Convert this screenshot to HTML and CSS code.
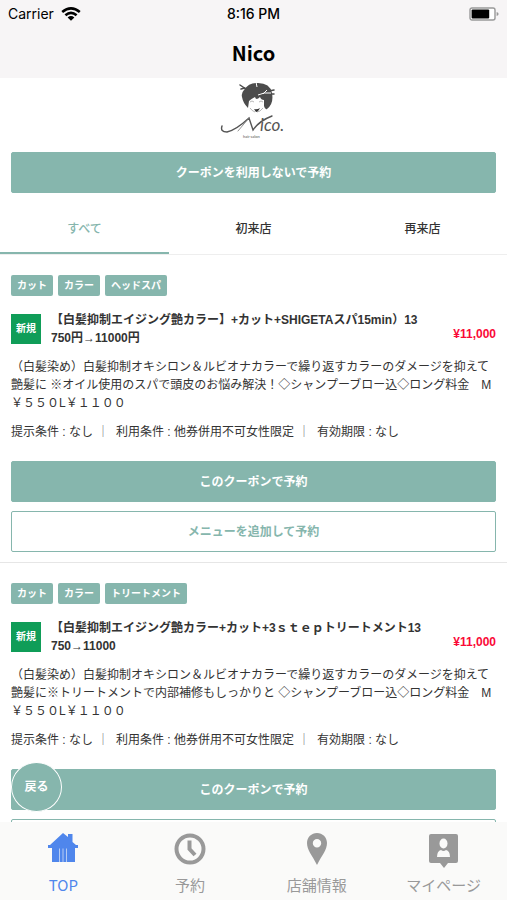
FILE: index.html
```html
<!DOCTYPE html>
<html lang="ja">
<head>
<meta charset="utf-8">
<meta name="viewport" content="width=device-width, initial-scale=1">
<title>Nico</title>
<link rel="stylesheet" href="styles.css">
</head>
<body>
<header class="header">
  <div class="status">
    <div class="status-carrier">Carrier
      <svg width="20" height="14" viewBox="0 0 20 14" aria-hidden="true"><g fill="none" stroke="#000" stroke-width="2.6"><path d="M1.2 5.1Q10-2.3 18.8 5.1"/><path d="M4.4 8.3Q10 3.6 15.6 8.3"/></g><path d="M6.6 10.5Q10 7.7 13.4 10.5L10 13.8Z"/></svg>
    </div>
    <div class="status-time">8:16 PM</div>
    <div class="status-battery">
      <svg width="30" height="14" viewBox="0 0 30 14" aria-hidden="true"><rect x="1" y="1" width="25" height="12" rx="2" fill="#fff" stroke="#999" stroke-width="1.4"/><rect x="2.6" y="2.6" width="17.6" height="8.8" rx="1"/><path d="M27.6 5v4q2-.5 2-2t-2-2z" fill="#999"/></svg>
    </div>
  </div>
  <h1 class="title">Nico</h1>
</header>

<main class="content">
  <svg class="logo" width="72" height="58" viewBox="0 0 72 58" role="img" aria-label="Nico hair salon">
    <path fill="#4c4c4c" d="M26 9Q31 1 40 2Q52 2 54 12Q56 23 49 28Q47 29 46 25L46 19Q43 19 42 16Q38 20 37 16Q33 18 31 20L30 27Q25 22 24 16Q23 12 26 9Z"/>
    <path fill="none" stroke="#4c4c4c" stroke-width="1.5" stroke-linecap="round" d="M22 4L28 8M23 8L27 7M51 10L56 9M53 13L56 13"/>
    <path fill="none" stroke="#fff" stroke-width="1" d="M38 1L39 6M40 14Q46 11 53 12M45 13L49 9"/>
    <path fill="none" stroke="#999" stroke-width=".7" d="M32 21Q34 19 36 21M41 21Q43 19 45 21M32 27Q34 30 37 31M39 31Q42 31 45 27"/>
    <path fill="#333" d="M36 28Q39 29 42 27Q40 31 38 31Z"/>
    <path fill="none" stroke="#555" stroke-width="1.4" stroke-linecap="round" d="M4 45Q2 51 9 51Q18 49 31 37L35 49Q41 40 54 35"/>
    <path fill="none" stroke="#777" stroke-width=".8" stroke-linecap="round" d="M31 37L20 50"/>
    <text class="logo-ico" x="42" y="50">ico.</text>
    <text class="logo-sub" x="25" y="57">hair salon</text>
  </svg>

  <button class="btn btn-top" type="button">クーポンを利用しないで予約</button>

  <div class="tabs" role="tablist">
    <button class="tab tab-active" type="button" role="tab" aria-selected="true">すべて</button>
    <button class="tab" type="button" role="tab" aria-selected="false">初来店</button>
    <button class="tab" type="button" role="tab" aria-selected="false">再来店</button>
  </div>

  <section class="coupon">
    <div class="tags"><span class="tag">カット</span><span class="tag">カラー</span><span class="tag">ヘッドスパ</span></div>
    <div class="coupon-head">
      <span class="badge">新規</span>
      <h2 class="coupon-title">【白髪抑制エイジング艶カラー】+カット+SHIGETAスパ15min）13<br>750円→11000円</h2>
      <span class="price">¥11,000</span>
    </div>
    <p class="desc">（白髪染め）白髪抑制オキシロン＆ルビオナカラーで繰り返すカラーのダメージを抑えて艶髪に ※オイル使用のスパで頭皮のお悩み解決！◇シャンプーブロー込◇ロング料金　M<wbr>￥５５０L￥１１００</p>
    <p class="terms"><span>提示条件 : なし</span><span class="bar">｜</span><span>利用条件 : 他券併用不可女性限定</span><span class="bar">｜</span><span>有効期限 : なし</span></p>
    <div class="actions">
      <button class="btn" type="button">このクーポンで予約</button>
      <button class="btn btn-outline" type="button">メニューを追加して予約</button>
    </div>
  </section>

  <section class="coupon">
    <div class="tags"><span class="tag">カット</span><span class="tag">カラー</span><span class="tag">トリートメント</span></div>
    <div class="coupon-head">
      <span class="badge">新規</span>
      <h2 class="coupon-title">【白髪抑制エイジング艶カラー+カット+3ｓｔｅｐトリートメント13<br>750→11000</h2>
      <span class="price">¥11,000</span>
    </div>
    <p class="desc">（白髪染め）白髪抑制オキシロン＆ルビオナカラーで繰り返すカラーのダメージを抑えて艶髪に※トリートメントで内部補修もしっかりと ◇シャンプーブロー込◇ロング料金　M<wbr>￥５５０L￥１１００</p>
    <p class="terms"><span>提示条件 : なし</span><span class="bar">｜</span><span>利用条件 : 他券併用不可女性限定</span><span class="bar">｜</span><span>有効期限 : なし</span></p>
    <div class="actions">
      <button class="btn" type="button">このクーポンで予約</button>
      <button class="btn btn-outline" type="button" aria-label="メニューを追加して予約"></button>
    </div>
  </section>
</main>

<button class="back" type="button">戻る</button>

<nav class="nav">
  <a class="nav-item nav-active" href="#top">
    <svg width="32" height="36" viewBox="0 0 32 36" aria-hidden="true"><path fill="currentColor" d="M16 2L21 6V3h4.500v8l3.500 3H31v3h-3v14H5V17H1v-3h2z"/><path stroke="#fafaf9" stroke-width="1" opacity=".6" d="M12.500 17.500V31M16 17.500V31M19.500 17.500V31"/></svg>
    <span>TOP</span>
  </a>
  <a class="nav-item" href="#reserve">
    <svg width="32" height="36" viewBox="0 0 32 36" aria-hidden="true"><circle cx="16" cy="18" r="13.500" fill="none" stroke="currentColor" stroke-width="4"/><path d="M15.500 9.500V18l5.500 6" fill="none" stroke="currentColor" stroke-width="4"/></svg>
    <span>予約</span>
  </a>
  <a class="nav-item" href="#shop">
    <svg width="32" height="36" viewBox="0 0 32 36" aria-hidden="true"><path fill="currentColor" fill-rule="evenodd" d="M16 2C10.500 2 6 6.300 6 12C6 19 11 24 16 34C21 24 26 19 26 12C26 6.300 21.500 2 16 2ZM16 8a4.200 4.200 0 1 1 0 8.400a4.200 4.200 0 0 1 0-8.400Z"/></svg>
    <span>店舗情報</span>
  </a>
  <a class="nav-item" href="#mypage">
    <svg width="32" height="36" viewBox="0 0 32 36" aria-hidden="true"><path fill="currentColor" d="M3 3H28Q30 3 30 5V30Q30 32 28 32H20L16 37L12 32H3Q1 32 1 30V5Q1 3 3 3Z"/><ellipse cx="15.500" cy="12.500" rx="4" ry="5" fill="#fafaf9"/><path fill="#fafaf9" d="M9 26Q9 20 13 19Q15.500 21 18 19Q22 20 22 26Z"/></svg>
    <span>マイページ</span>
  </a>
</nav>
</body>
</html>
```
FILE: styles.css
```css
* {
  box-sizing: border-box;
}

body {
  position: relative;
  display: flex;
  flex-direction: column;
  height: 100vh;
  margin: 0;
  overflow: hidden;
  background: #fff;
  color: #333;
  font: 12px/18px "Liberation Sans", "Noto Sans CJK JP", sans-serif;
}

button {
  font: inherit;
  cursor: pointer;
}

h1,
h2,
p {
  margin: 0;
}

.header {
  flex: none;
  height: 78px;
  background: #f7f5f6;
  color: #000;
}

.status {
  display: grid;
  grid-template-columns: 1fr auto 1fr;
  align-items: center;
  height: 28px;
  padding: 0 8px;
  font: 400 14px/28px Inter, sans-serif;
}

.status-carrier {
  display: flex;
  align-items: center;
  gap: 7px;
}

.status-time {
  font-weight: 500;
}

.status-battery {
  display: flex;
  justify-content: flex-end;
}

.title {
  font: 700 20px/50px "Noto Sans CJK JP", sans-serif;
  text-align: center;
}

.content {
  flex: 1;
  min-height: 0;
  overflow: hidden;
}

.logo {
  display: block;
  margin: 3px auto 13px;
}

.logo text {
  fill: #555;
  font-family: Lato, sans-serif;
}

.logo .logo-ico {
  font-size: 17px;
  font-style: italic;
}

.logo .logo-sub {
  font-size: 4px;
}

.btn {
  display: block;
  width: 100%;
  height: 41px;
  padding: 1px 0 0;
  border: 1px solid #86b6ad;
  border-radius: 2px;
  background: #86b6ad;
  color: #fff;
  font-weight: 700;
}

.btn-top {
  width: calc(100% - 22px);
  margin: 0 11px;
}

.btn-outline {
  background: #fff;
  color: #86b6ad;
}

.tabs {
  display: grid;
  grid-template-columns: repeat(3, 1fr);
  margin-top: 9px;
  border-bottom: 1px solid #eee;
}

.tab {
  height: 52px;
  padding: 4px 0 0;
  border: 0;
  border-bottom: 2px solid transparent;
  background: none;
  color: #333;
  font-weight: 500;
}

.tab-active {
  border-bottom-color: #86b6ad;
  color: #86b6ad;
}

.coupon {
  padding: 20px 11px 10px;
  border-bottom: 1px solid #e6e6e6;
}

.tags {
  display: flex;
  gap: 5px;
}

.tag {
  padding: 0 6px;
  border-radius: 2px;
  background: #86b6ad;
  color: #fff;
  font-size: 10px;
  font-weight: 700;
  line-height: 21px;
}

.coupon-head {
  display: flex;
  align-items: center;
  margin: 15px 0 11px;
}

.badge {
  flex: none;
  width: 30px;
  margin-right: 10px;
  background: #0f9d58;
  color: #fff;
  font-size: 10px;
  font-weight: 700;
  line-height: 30px;
  text-align: center;
}

.coupon-title {
  flex: 1;
  font-size: 12px;
  font-weight: 700;
  line-height: 18px;
}

.price {
  flex: none;
  margin-top: 10px;
  color: #fa0a37;
  font-weight: 700;
}

.terms {
  display: flex;
  margin: 11px 0 20px;
}

.bar {
  margin-right: 7px;
  margin-left: 4px;
  color: #666;
}

.actions {
  display: grid;
  gap: 9px;
}

.back {
  position: absolute;
  bottom: 88px;
  left: 11px;
  width: 51px;
  height: 50px;
  padding: 0;
  border: 1px solid #fff;
  border-radius: 50%;
  background: #86b6ad;
  color: #fff;
  font-weight: 700;
}

.nav {
  display: grid;
  flex: none;
  grid-template-columns: repeat(4, 1fr);
  height: 78px;
  background: #fafaf9;
}

.nav-item {
  display: flex;
  flex-direction: column;
  align-items: center;
  gap: 8px;
  padding-top: 9px;
  color: #999;
  font: 15px/20px "Noto Sans CJK JP", sans-serif;
  text-decoration: none;
}

.nav-item svg {
  overflow: visible;
}

.nav-active {
  color: #4f86ec;
}
```
